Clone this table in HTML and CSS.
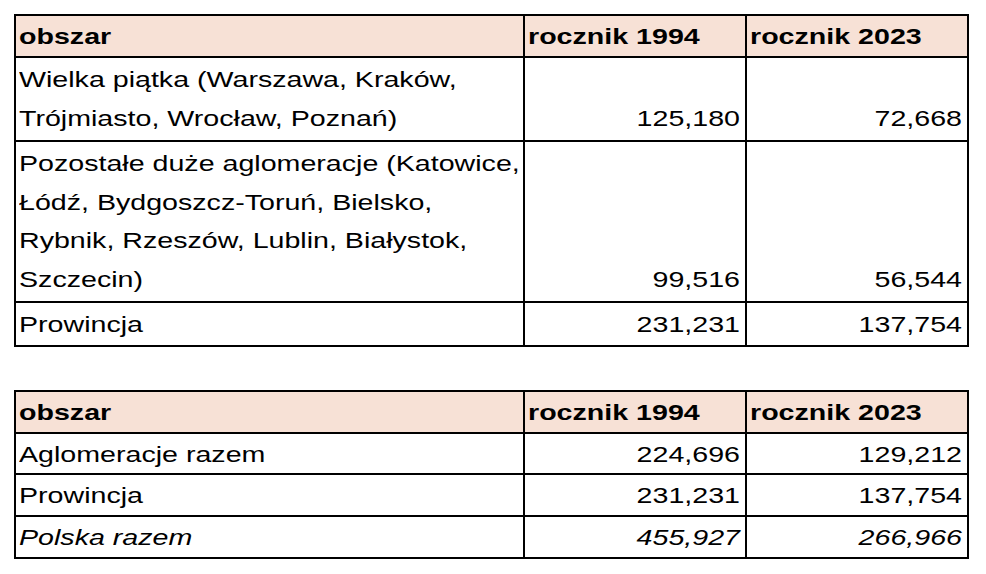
FILE: index.html
```html
<!DOCTYPE html>
<html lang="pl">
<head>
<meta charset="utf-8">
<link rel="stylesheet" href="styles.css">
</head>
<body>
<div class="page">
  <table class="data">
    <colgroup><col class="c1"><col class="c2"><col class="c3"></colgroup>
    <thead>
      <tr><th><span class="t">obszar</span></th><th><span class="t">rocznik 1994</span></th><th><span class="t">rocznik 2023</span></th></tr>
    </thead>
    <tbody>
      <tr class="tall"><td><span class="t">Wielka piątka (Warszawa, Kraków,<br>Trójmiasto, Wrocław, Poznań)</span></td><td class="num"><span class="t">125,180</span></td><td class="num"><span class="t">72,668</span></td></tr>
      <tr class="tall"><td><span class="t">Pozostałe duże aglomeracje (Katowice,<br>Łódź, Bydgoszcz-Toruń, Bielsko,<br>Rybnik, Rzeszów, Lublin, Białystok,<br>Szczecin)</span></td><td class="num"><span class="t">99,516</span></td><td class="num"><span class="t">56,544</span></td></tr>
      <tr><td><span class="t">Prowincja</span></td><td class="num"><span class="t">231,231</span></td><td class="num"><span class="t">137,754</span></td></tr>
    </tbody>
  </table>
  <table class="data compact">
    <colgroup><col class="c1"><col class="c2"><col class="c3"></colgroup>
    <thead>
      <tr><th><span class="t">obszar</span></th><th><span class="t">rocznik 1994</span></th><th><span class="t">rocznik 2023</span></th></tr>
    </thead>
    <tbody>
      <tr><td><span class="t">Aglomeracje razem</span></td><td class="num"><span class="t">224,696</span></td><td class="num"><span class="t">129,212</span></td></tr>
      <tr><td><span class="t">Prowincja</span></td><td class="num"><span class="t">231,231</span></td><td class="num"><span class="t">137,754</span></td></tr>
      <tr class="total"><td><span class="t">Polska razem</span></td><td class="num"><span class="t">455,927</span></td><td class="num"><span class="t">266,966</span></td></tr>
    </tbody>
  </table>
</div>
</body>
</html>
```
FILE: styles.css
```css
html, body {
  margin: 0;
  padding: 0;
  background: #ffffff;
}
.page {
  display: flex;
  flex-direction: column;
  gap: 43px;
  padding: 14px 0 0 14px;
  font-family: "Liberation Sans", Arial, sans-serif;
  font-size: 22px;
  color: #000;
}
.data {
  border-collapse: collapse;
  table-layout: fixed;
  width: 953px;
}
.c1 { width: 509px; }
.c2 { width: 222px; }
.c3 { width: 222px; }
.data th,
.data td {
  border: 2px solid #000;
  text-align: left;
  vertical-align: top;
  white-space: nowrap;
}
.data th {
  background: #f7e1d6;
  font-weight: bold;
  line-height: 38px;
  padding: 2px 5px 0 3px;
}
.data td {
  line-height: 38.5px;
  padding: 3px 5px 0 3px;
}
.compact td {
  line-height: 36.75px;
}
.data .tall td {
  padding-bottom: 2px;
}
.data td.num {
  text-align: right;
  vertical-align: bottom;
}
.t {
  display: block;
  transform: scaleX(1.3);
  transform-origin: left center;
}
.num .t {
  transform-origin: right center;
}
.total td {
  font-style: italic;
}
```
